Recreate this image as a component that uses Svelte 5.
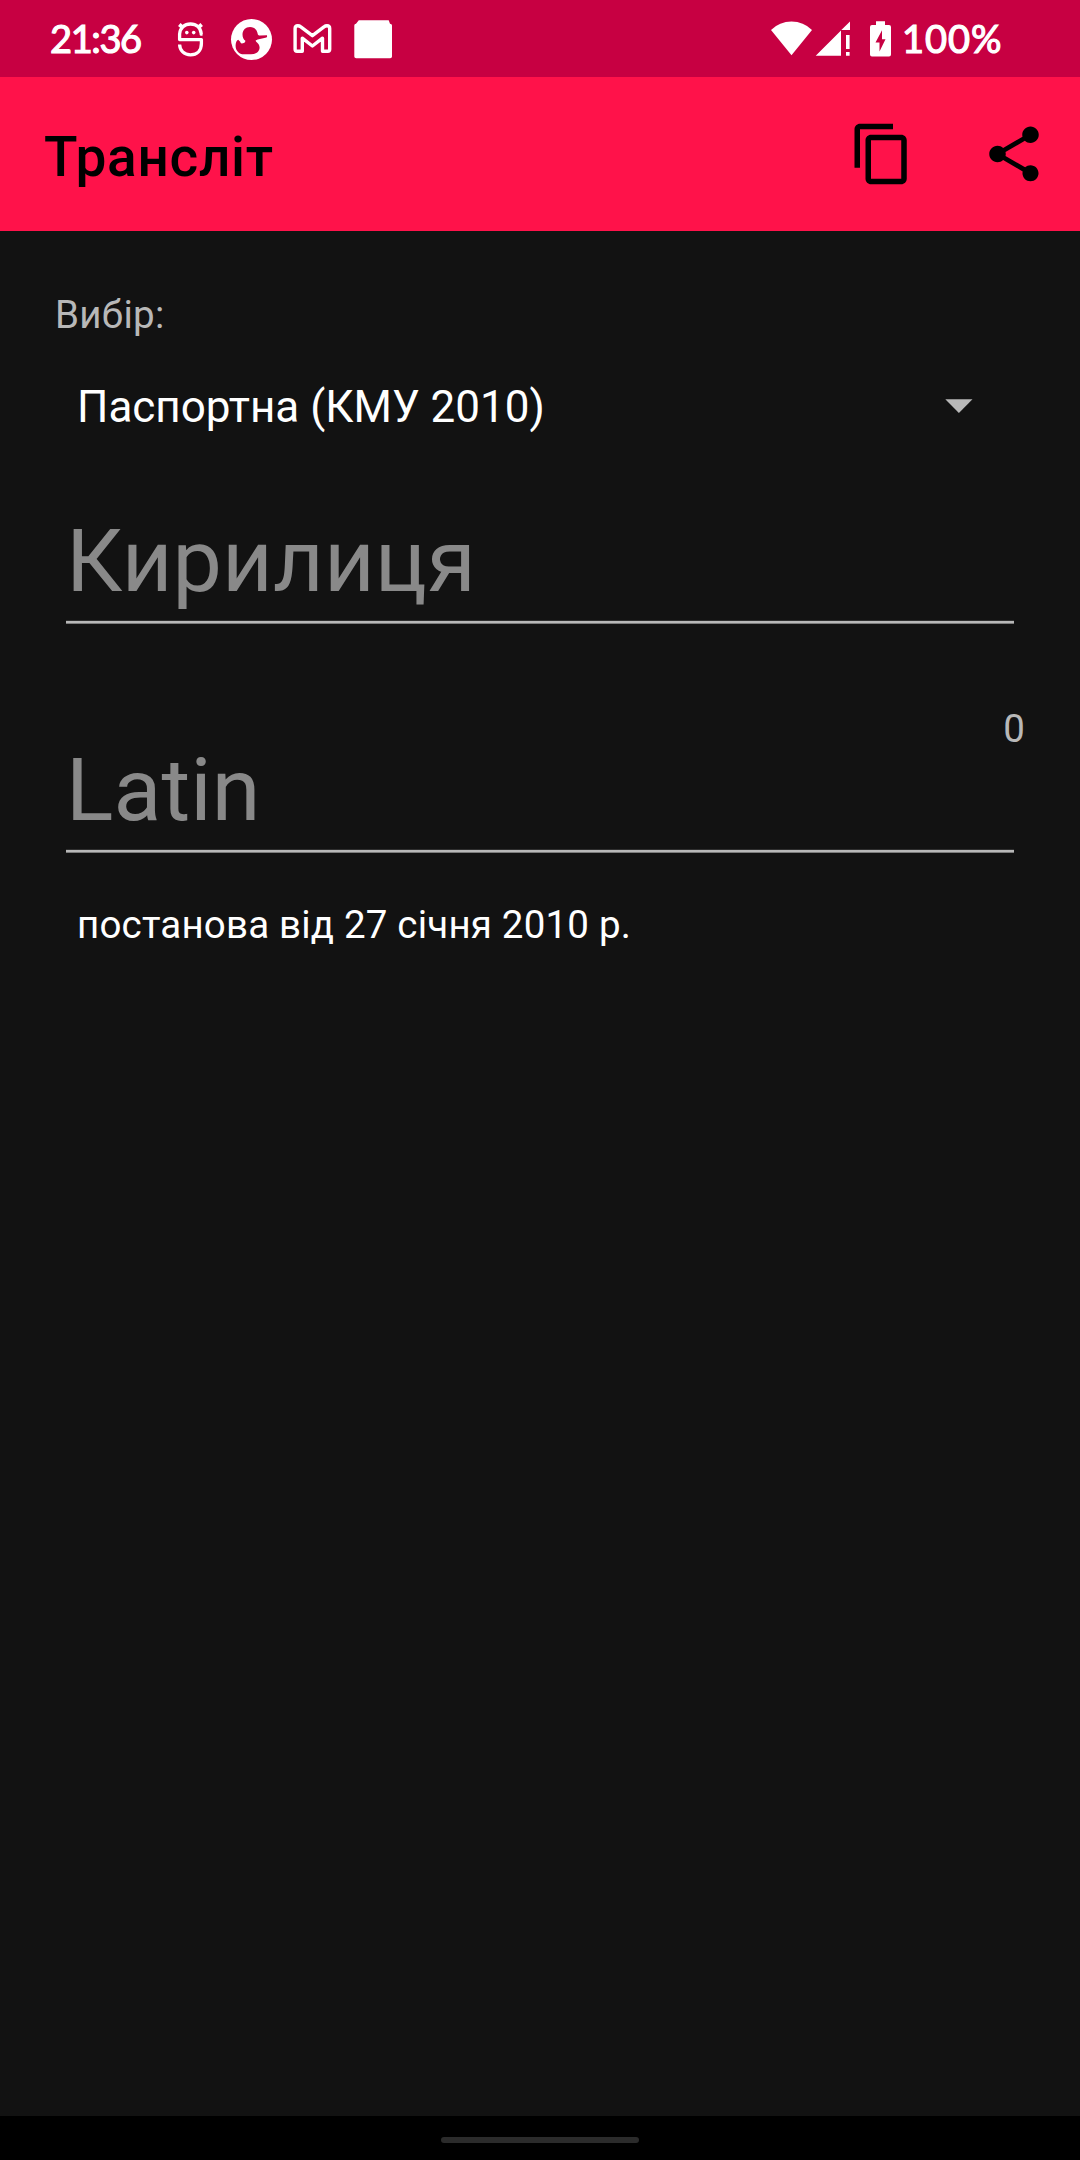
<script>
  let cyrillic = $state('');
  let latin = $state('');
  const count = $derived(cyrillic.length);
</script>

<div class="screen">
  <header class="status">
    <span class="clock">21:36</span>
    <svg class="notifications" viewBox="170 0 230 77" width="230" height="77" aria-hidden="true">
      <g fill="none" stroke="#fff" stroke-width="3.300" stroke-linejoin="round">
        <path d="M202.5 34.2H201.2V33.5C200.5 27.5 196.500 24 190.500 24S180 27.800 179.600 34V39.600H201.400V43.500C201.400 50.500 197 54.800 190.500 54.800S179.800 50.500 179.600 44.500" />
        <path d="M179.300 24.500L183 27.700M201.700 24.500L198 27.700" stroke-width="3.800" />
      </g>
      <g fill="#fff">
        <circle cx="186.800" cy="32.600" r="1.800" />
        <circle cx="193.700" cy="32.600" r="1.800" />
        <circle cx="251.500" cy="39.500" r="20.500" />
        <path d="M354.300 25.500Q354.300 23.700 356 23.700L358.800 20.300H388.700L390 23.700Q392 23.700 392 25.500V56.500Q392 58.300 390.200 58.300H356.200Q354.300 58.300 354.300 56.500Z" />
      </g>
      <path fill="#c70042" d="M242.500 34.500C242.500 30 245.600 27 250 27C254 27 256.700 29.200 257.500 33C257.700 34.800 258.600 35.700 260.500 35.600L266.900 35.300Q267.500 36.800 266.400 37.500L261 38.800Q257 39.500 255.600 40.500C256 42.500 259.600 43.500 259.600 47.500C259.600 52 255.500 54.300 251 54.300H244C238.800 54.300 235.500 50.500 235.600 45.500C235.700 42.500 236.500 40.500 238.200 39.800L240.200 41.800Q240.500 43.700 242 43.500Q244.200 43.300 245 42.200L245.400 40.800C243.600 39.500 242.500 37.500 242.500 34.500Z" />
      <path fill="none" stroke="#fff" stroke-width="3.400" stroke-linejoin="round" d="M302.300 51.300H297Q295.100 51.300 295.100 49.300V28.500Q295.100 25.700 297.800 25.700Q299.400 25.700 300.500 26.600L312.400 35.700L324.300 26.600Q325.400 25.700 327 25.700Q329.700 25.700 329.700 28.500V49.300Q329.700 51.300 327.800 51.300H322.500V38.200L312.400 46L302.300 38.200Z" />
    </svg>
    <span class="spacer"></span>
    <svg class="system" viewBox="770 0 124 77" width="124" height="77" fill="#fff" aria-hidden="true">
      <path d="M771 30Q779.500 21.500 791.500 21.500T812 30L791.500 55.300Z" />
      <path d="M815.700 55.700L841 30.400V55.700ZM841.300 30.100L850 21.500V30.100ZM846 35H849.600V49H846ZM846 52H849.600V55.700H846Z" />
      <path fill-rule="evenodd" d="M876 21.300H885V24.900H889Q891 24.900 891 26.900V54.600Q891 56.600 889 56.600H872Q870 56.600 870 54.600V26.900Q870 24.900 872 24.900H876ZM882 30.300L875.500 42.500H879.500V51.500L885.500 39.300H882Z" />
    </svg>
    <span class="battery">100%</span>
  </header>

  <div class="appbar">
    <h1>Трансліт</h1>
    <button aria-label="Копіювати">
      <svg viewBox="0 0 24 24"><path d="M16 1H4c-1.100 0-2 .9-2 2v14h2V3h12V1zm3 4H8c-1.100 0-2 .9-2 2v14c0 1.100.9 2 2 2h11c1.100 0 2-.9 2-2V7c0-1.100-.9-2-2-2zm0 16H8V7h11v14z" /></svg>
    </button>
    <button aria-label="Поділитися">
      <svg viewBox="0 0 24 24"><path d="M18 16.080c-.76 0-1.440.3-1.960.77L8.910 12.700c.05-.23.09-.46.09-.7s-.04-.47-.09-.7l7.050-4.110c.54.5 1.250.81 2.040.81 1.660 0 3-1.340 3-3s-1.340-3-3-3-3 1.340-3 3c0 .24.04.47.09.7L8.040 9.810C7.500 9.310 6.790 9 6 9c-1.660 0-3 1.340-3 3s1.340 3 3 3c.79 0 1.500-.31 2.040-.81l7.120 4.160c-.05.21-.08.43-.08.65 0 1.610 1.310 2.920 2.920 2.920s2.920-1.310 2.920-2.920-1.310-2.920-2.920-2.920z" /></svg>
    </button>
  </div>

  <main>
    <div class="label">Вибір:</div>
    <div class="select">
      <span>Паспортна (КМУ 2010)</span>
      <svg viewBox="0 0 28 14" width="28" height="14"><path d="M.3 .3H27.500L13.900 14Z" fill="#b8b8b8" /></svg>
    </div>
    <div class="field">
      <input type="text" placeholder="Кирилиця" bind:value={cyrillic} />
      <div class="line"></div>
    </div>
    <div class="count">{count}</div>
    <div class="field">
      <input type="text" placeholder="Latin" bind:value={latin} />
      <div class="line"></div>
    </div>
    <p class="note">постанова від 27 січня 2010 р.</p>
  </main>

  <footer><div class="pill"></div></footer>
</div>

<style>
  :global(body) { background: #121212; }
  .screen {
    width: 1080px;
    height: 2160px;
    display: flex;
    flex-direction: column;
    background: #121212;
    color: #fff;
    font-family: Roboto, sans-serif;
    overflow: hidden;
  }
  .status {
    height: 77px;
    display: flex;
    background: #c70042;
    font: 400 38px/77px Lato, sans-serif;
    -webkit-text-stroke: 1.2px #fff;
    padding: 0 78px 0 50px;
    box-sizing: border-box;
  }
  .status svg { -webkit-text-stroke: 0; flex: none; }
  .clock { width: 120px; letter-spacing: -1.400px; }
  .spacer { flex: 1; }
  .battery { width: 108px; padding-left: 8px; box-sizing: border-box; white-space: nowrap; letter-spacing: 1px; }
  .appbar {
    height: 154px;
    display: flex;
    align-items: center;
    gap: 66px;
    background: #ff124a;
    padding: 0 33.250px 0 44px;
    box-sizing: border-box;
    color: #000;
  }
  h1 { flex: 1; margin: 6px 0 0; font-size: 55px; line-height: 64px; font-weight: 500; letter-spacing: 0.700px; }
  button { width: 66px; height: 66px; padding: 0; border: 0; background: none; }
  button svg { display: block; width: 66px; height: 66px; fill: #000; }
  main { flex: 1; padding: 0 55px; display: flex; flex-direction: column; }
  .label { margin-top: 61px; height: 46px; font-size: 38.5px; line-height: 46px; letter-spacing: 0.300px; color: #b8b8b8; }
  .select {
    margin-top: 36px;
    height: 66px;
    padding: 0 52px 0 22px;
    display: flex;
    align-items: center;
    justify-content: space-between;
    font-size: 44px;
    line-height: 66px;
  }
  .select svg { margin-bottom: 2px; }
  .field { padding: 0 11px; }
  input {
    display: block;
    width: 100%;
    height: 104px;
    margin-bottom: 7px;
    padding: 0;
    border: 0;
    outline: 0;
    background: none;
    color: #fff;
    font: 88px/104px Roboto, sans-serif;
    letter-spacing: 0.100px;
  }
  input::placeholder { color: #898989; opacity: 1; }
  .line { height: 4px; background: linear-gradient(#2e2e2e 1px, #b8b8b8 1px 3px, #7c7c7c 3px); }
  .select + .field { margin-top: 69px; }
  .count { margin-top: 82px; height: 32px; text-align: right; font-size: 38.5px; line-height: 46px; color: #b8b8b8; }
  .note { margin: 49px 0 0 22px; font-size: 38.5px; line-height: 46px; letter-spacing: 0.190px; }
  footer { height: 44px; display: flex; justify-content: center; padding-top: 21px; box-sizing: border-box; background: #000; }
  .pill { width: 198px; height: 6px; border-radius: 3px; background: #2b2b2b; }
</style>
